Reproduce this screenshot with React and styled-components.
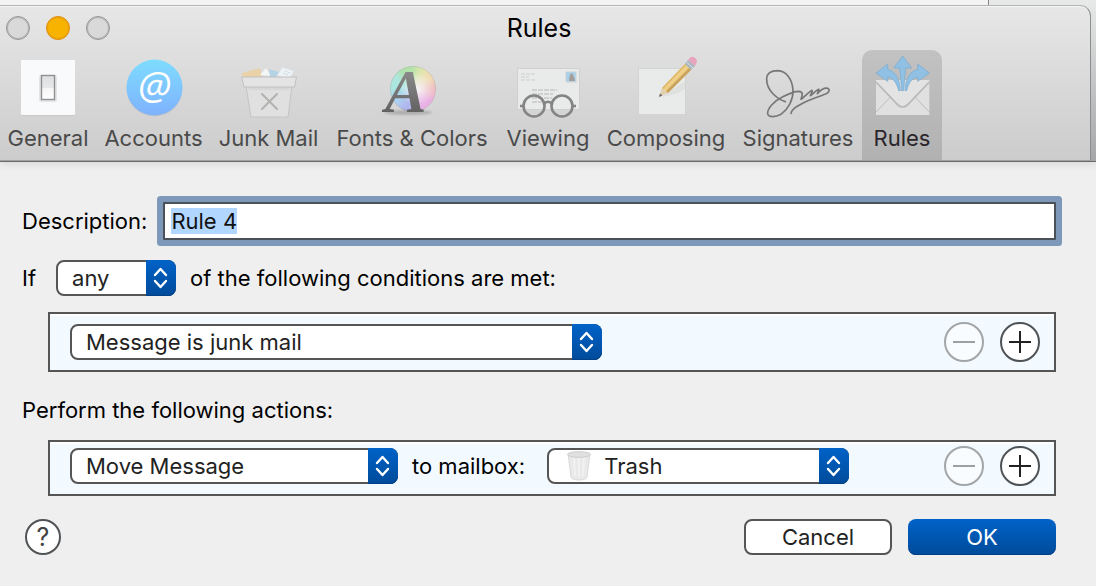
import React, { useState, useEffect, useRef } from 'react'
import styled, { createGlobalStyle, css } from 'styled-components'


const GlobalStyle = createGlobalStyle`
* {
box-sizing: border-box;
}
body {
margin: 0;
background-color: #efefef;
color: #000;
font-family: Inter, "Liberation Sans", sans-serif;
font-size: 22px;
line-height: 28px;
}
button, input, select {
font: inherit;
color: inherit;
margin: 0;
}
`

const Header = styled.header`
padding: 5px 5px 0 0;
background:
linear-gradient(to right, #f3f3f3 calc(100% - 108px), #858585 calc(100% - 108px), #858585 calc(100% - 107px), transparent calc(100% - 107px)) top / 100% 5px no-repeat,
linear-gradient(#e8eaea, #c4c6c7 50%, #a4a6a8);
border-bottom: 1px solid #6a6a6a;
box-shadow: 0 2px 8px rgba(0, 0, 0, 0.1);
`

const Toolbar = styled.div`
border-top: 1px solid #b4b4b4;
border-right: 1px solid #8e8e8e;
border-bottom: 1px solid #a0a0a0;
border-top-right-radius: 11px;
background: linear-gradient(#e7e7e7, #cccccc);
box-shadow: inset 0 1px 0 #f6f6f6;
`

const TitleBar = styled.div`
display: grid;
grid-template-columns: 1fr auto 1fr;
align-items: center;
height: 44px;
padding: 0 18px 0 6px;
`

const WindowButtons = styled.div`
display: flex;
gap: 16px;
`

const WindowButton = styled.button`
width: 24px;
height: 24px;
padding: 0;
border: 1px solid ${prop => prop.$active ? "#dc8d10" : "#949698"};
border-radius: 50%;
background-color: ${prop => prop.$active ? "#f7b300" : "#d9d9d9"};
box-shadow: inset 0 0 0 1px ${prop => prop.$active ? "#efa50a" : "#b4b5b6"};
`

const Title = styled.h1`
margin: 0;
font-size: 25px;
font-weight: 400;
line-height: 32px;
`

const Tabs = styled.nav`
display: flex;
`

const Tab = styled.button`
display: flex;
flex-direction: column;
align-items: center;
flex: 0 1 ${prop => prop.$width}px;
min-width: 0;
height: 110px;
padding: 4px 0 0;
border: none;
border-radius: 10px 10px 0 0;
background-color: ${prop => prop.$selected ? "rgba(0, 0, 0, 0.13)" : "transparent"};
color: ${prop => prop.$selected ? "#2a262b" : "#4a4a4a"};
white-space: nowrap;
`

const TabIcon = styled.svg`
display: block;
flex: none;
width: 72px;
height: 64px;
margin-bottom: 6px;
overflow: visible;
`

const Form = styled.form`
padding: 40px 40px 31px 22px;
`

const Row = styled.div`
display: flex;
align-items: center;
gap: ${prop => prop.$gap || 14}px;
`

const Label = styled.label`
flex: none;
`

const TextInput = styled.input`
flex: 1;
min-width: 0;
height: 38px;
padding: 0 6px;
border: 2px solid #4a5159;
border-radius: 1px;
outline: none;
background-color: #fff;
line-height: 28px;
box-shadow: 0 0 0 6px #7e98ba;
&::selection {
background-color: #b1d6ff;
color: #111;
}
`

const ConditionRow = styled(Row)`
margin: 20px 0 16px;
`

const IfText = styled.span`
margin-right: 6px;
`

const Heading = styled.h2`
margin: 24px 0 16px;
font-size: 22px;
font-weight: 400;
line-height: 28px;
`

const Panel = styled.div`
display: flex;
align-items: center;
gap: 14px;
margin-left: 26px;
padding: ${prop => prop.$tight ? "4px 14px 8px 20px" : "8px 14px 8px 20px"};
border: 2px solid #555;
background-color: #f2f9ff;
box-shadow: inset 0 2px 0 #fff;
`

const MailboxText = styled.span`
margin-right: 8px;
`

const SelectBox = styled.span`
display: grid;
grid-template-columns: 1fr 30px;
grid-template-rows: 36px;
align-items: center;
flex: 0 1 ${prop => prop.$width}px;
min-width: 0;
`

const NativeSelect = styled.select`
grid-area: 1 / 1 / 2 / 3;
appearance: none;
width: 100%;
height: 36px;
padding: 0 36px 0 ${prop => prop.$hasIcon ? 55 : 14}px;
border: 2px solid #555;
border-radius: 8px;
background-color: #fff;
color: #222;
`

const blueFill = css`
background: linear-gradient(#0062c8, #004b9a);
box-shadow: inset 0 -1px 0 #003f86;
`

const SelectCap = styled.span`
grid-area: 1 / 2 / 2 / 3;
height: 36px;
border-radius: 0 8px 8px 0;
pointer-events: none;
z-index: 1;
${blueFill}
`

const SelectIcon = styled.svg`
grid-area: 1 / 1 / 2 / 2;
width: 26px;
height: 32px;
margin-left: 19px;
pointer-events: none;
z-index: 1;
`

const RoundButtons = styled.div`
display: flex;
gap: 16px;
margin-left: auto;
`

const RoundButton = styled.button`
display: grid;
place-items: center;
width: 40px;
height: 40px;
padding: 0;
border: 2px solid #505355;
border-radius: 50%;
background-color: #fff;
color: #222;
&:disabled {
border-color: #a3a5a7;
background-color: #f8fcff;
color: #9da0a2;
}
`

const HelpButton = styled(RoundButton)`
width: 36px;
height: 36px;
margin: 0 auto 0 3px;
color: #444;
font-size: 25px;
`

const Footer = styled(Row)`
margin-top: 23px;
`

const PushButton = styled.button`
flex: 0 1 148px;
height: 36px;
padding: 0;
border: 2px solid #555;
border-radius: 8px;
background-color: #fff;
color: #222;
${prop => prop.$primary && css`
border: none;
color: #fff;
${blueFill}
`}
`


const GeneralIcon = () => (
    <TabIcon viewBox="0 0 72 64" aria-hidden="true">
        <defs>
            <linearGradient id="rocker" x1="0" y1="0" x2="0" y2="1">
                <stop offset="0" stopColor="#dedfe1" />
                <stop offset="0.5" stopColor="#e6e7e8" />
                <stop offset="0.52" stopColor="#f5f5f5" />
                <stop offset="1" stopColor="#fff" />
            </linearGradient>
        </defs>
        <rect x="9" y="7" width="54" height="55" rx="1" fill="#c2c2c2" opacity="0.6" />
        <rect x="9" y="6" width="54" height="55" rx="1" fill="#f9fafb" />
        <rect x="27" y="21" width="18" height="27" rx="2" fill="#e4e5e6" />
        <rect x="29.5" y="21.5" width="13" height="24" fill="url(#rocker)" stroke="#8f9091" strokeWidth="1.4" />
    </TabIcon>
)

const AccountsIcon = () => (
    <TabIcon viewBox="0 0 72 64" aria-hidden="true">
        <defs>
            <linearGradient id="sky" x1="0" y1="0" x2="0" y2="1">
                <stop offset="0" stopColor="#7edcff" />
                <stop offset="1" stopColor="#7fb2fd" />
            </linearGradient>
        </defs>
        <circle cx="36.5" cy="34.5" r="28" fill="#a9b2bd" opacity="0.5" />
        <circle cx="36.5" cy="33.5" r="28" fill="url(#sky)" />
        <text x="36.5" y="46" textAnchor="middle" fontFamily="Open Sans" fontStyle="italic" fontSize="39" fill="#fff">@</text>
    </TabIcon>
)

const JunkIcon = () => (
    <TabIcon viewBox="1 1 72 64" aria-hidden="true">
        <path d="M10 20L28 15L30 24H10Z" fill="#e9d1a8" />
        <path d="M28 22L34 15L39 23Z" fill="#f4f5f5" />
        <path d="M37 16L47 19L44 24H38Z" fill="#b4d3e5" />
        <path d="M50 14L62 18L58 25L45 23Z" fill="#eef2f5" stroke="#d3dbe1" strokeWidth="0.6" />
        <path d="M53 18L58 20M51 20L56 22" stroke="#c3d5e2" strokeWidth="0.8" />
        <path d="M14 33H60L56 64H19Z" fill="#e0e0e0" stroke="#c4c4c4" />
        <path d="M16 34H58L57 37H17Z" fill="#d0d0d0" opacity="0.6" />
        <path d="M9.5 24H64.5L62.5 34H12Z" fill="#e4e4e4" stroke="#c0c0c0" strokeLinejoin="round" />
        <path d="M30 41L45 56M45 41L30 56" stroke="#b2b2b1" strokeWidth="2" strokeLinecap="round" />
    </TabIcon>
)

const FontsIcon = () => (
    <TabIcon viewBox="0 0 72 64" aria-hidden="true">
        <defs>
            <clipPath id="wheel"><circle cx="37" cy="35" r="23" /></clipPath>
            <filter id="soften" x="-20%" y="-20%" width="140%" height="140%"><feGaussianBlur stdDeviation="3" /></filter>
            <radialGradient id="glow">
                <stop offset="0" stopColor="#f6f6f6" />
                <stop offset="1" stopColor="#f6f6f6" stopOpacity="0" />
            </radialGradient>
            <linearGradient id="ink" x1="0" y1="0" x2="0" y2="1">
                <stop offset="0" stopColor="#999" />
                <stop offset="1" stopColor="#555" />
            </linearGradient>
        </defs>
        <g clipPath="url(#wheel)">
            <g filter="url(#soften)">
                <path d="M37 34L8 6H42Z" fill="#b0e2aa" />
                <path d="M37 34L42 4L64 10Z" fill="#dde7ac" />
                <path d="M37 34L60 4L68 32Z" fill="#f1dcb2" />
                <path d="M37 34L68 26V52Z" fill="#efbdc4" />
                <path d="M37 34L68 48L40 66Z" fill="#eab0e5" />
                <path d="M37 34L44 66L10 60Z" fill="#b0b6ee" />
                <path d="M37 34L14 64L6 36Z" fill="#acd1f0" />
                <path d="M37 34L6 42L8 6Z" fill="#abe6df" />
            </g>
            <circle cx="41" cy="35" r="17" fill="url(#glow)" />
        </g>
        <circle cx="37" cy="35" r="22.6" fill="none" stroke="#aaa" strokeWidth="0.6" opacity="0.7" />
        <ellipse cx="32" cy="58.5" rx="24" ry="2.5" fill="#777" opacity="0.4" filter="blur(1px)" />
        <text x="9" y="58" fontFamily="Liberation Serif" fontSize="62" fontWeight="700" fontStyle="italic" fill="url(#ink)">A</text>
    </TabIcon>
)

const ViewingIcon = () => (
    <TabIcon viewBox="0 0 72 64" aria-hidden="true">
        <rect x="5.5" y="14.5" width="62" height="41" fill="#e9eaea" stroke="#d0d0d0" />
        <rect x="54" y="18" width="10" height="10" fill="#a5cfea" stroke="#d0d4d7" />
        <path d="M57 27C57 23 58 20 60 19C61 22 63 24 63 27Z" fill="#a39f98" />
        <path d="M9 20H23M9 23H17M9 26H24" stroke="#cbcbcb" strokeWidth="1.2" strokeDasharray="4 1" />
        <path d="M20 36H45M20 40H41M20 44H40M20 48H30" stroke="#d0d0d0" strokeWidth="2" strokeDasharray="5 1" />
        <g fill="none" stroke="#848484" strokeWidth="2.6">
            <circle cx="22" cy="52" r="10.5" />
            <circle cx="50" cy="52" r="10.5" />
            <path d="M32 50C34 47 38 47 40 50M12 52H8M60 52H64" />
        </g>
    </TabIcon>
)

const ComposingIcon = () => (
    <TabIcon viewBox="0 0 72 64" aria-hidden="true">
        <rect x="8.5" y="14.5" width="47" height="46" fill="#e9ebeb" stroke="#d2d3d3" />
        <path d="M31 43L55 27V35C48 40 40 42 31 43Z" fill="#d8d8d8" opacity="0.6" />
        <path d="M29 43L32 34L38 39Z" fill="#e2cfae" />
        <path d="M29 43L30 39.5L32.4 41.5Z" fill="#666" />
        <path d="M32 34L55 10L61 16L38 39Z" fill="#efce85" />
        <path d="M36 37L59 14L61 16L38 39Z" fill="#c9a25d" />
        <path d="M32 34L55 10L56 11L33 35Z" fill="#dcb668" />
        <path d="M55 10L58 6L65 12L61 16Z" fill="#a9b5bd" />
        <path d="M57 8.5L63 14" stroke="#dde3e6" strokeWidth="1" />
        <path d="M58 6C61 2 63 2 65 4C68 6 67 9 65 12Z" fill="#e6a5bd" />
    </TabIcon>
)

const SignaturesIcon = () => (
    <TabIcon viewBox="-3 0 216 192" aria-hidden="true">
        <path
            d="M67 143C44 136 10 110 11 74C12 56 27 50 44 50C72 51 88 78 90 108C91 137 76 165 54 181C38 190 16 191 14 179C13 162 34 141 58 129C75 120 93 112 107 112C121 113 119 122 114 136C123 131 131 119 146 109C150 109 146 116 142 125C149 121 157 111 167 106C170 107 165 112 163 119C171 110 183 100 194 103C203 107 197 117 186 121C163 129 132 139 111 152C98 160 86 165 84 178"
            fill="none"
            stroke="#777"
            strokeWidth="5"
            strokeLinecap="round"
            strokeLinejoin="round"
        />
    </TabIcon>
)

const RulesIcon = () => (
    <TabIcon viewBox="0 0 216 192" aria-hidden="true">
        <rect x="30" y="78" width="160" height="105" fill="#e0e0e1" />
        <path d="M30 174L76 126M190 174L144 126" stroke="#bdbdbe" strokeWidth="3" />
        <path d="M30 78L91 146Q110 168 129 146L190 78Z" fill="#e3e3e3" />
        <path d="M30 84L91 148Q110 170 129 148L190 84" fill="none" stroke="#b9b9ba" strokeWidth="5" />
        <g fill="#90c0e4" stroke="#79a9cd" strokeWidth="2" strokeLinejoin="round">
            <path d="M110 6L137 42H119L113 110H107L101 42H83Z" />
            <path id="side-arrow" d="M30 57L65 30V46C90 52 102 78 103 110H98C91 84 82 73 65 69V82Z" />
            <use href="#side-arrow" transform="translate(220 0) scale(-1 1)" />
        </g>
    </TabIcon>
)

const tabs = [
    { name: 'General', width: 96, Icon: GeneralIcon },
    { name: 'Accounts', width: 115, Icon: AccountsIcon },
    { name: 'Junk Mail', width: 115, Icon: JunkIcon },
    { name: 'Fonts & Colors', width: 172, Icon: FontsIcon },
    { name: 'Viewing', width: 100, Icon: ViewingIcon },
    { name: 'Composing', width: 136, Icon: ComposingIcon },
    { name: 'Signatures', width: 128, Icon: SignaturesIcon },
    { name: 'Rules', width: 80, Icon: RulesIcon },
]

const TrashIcon = () => (
    <SelectIcon viewBox="0 0 26 32" aria-hidden="true">
        <path d="M2 4L5 27Q6 30 13 30Q20 30 21 27L24 4Z" fill="#e9e9e9" stroke="#dadada" />
        <path d="M8 8L9 26M13 8V27M18 8L17 26" stroke="#f1f1f1" strokeWidth="2" />
        <ellipse cx="13" cy="4.5" rx="11.5" ry="2.8" fill="#e0e0e0" stroke="#cdcdcd" />
    </SelectIcon>
)

const PopUp = ({ label, options, width, icon }) => {
    const [value, setValue] = useState(options[0])

    return (
        <SelectBox $width={width}>
            <NativeSelect aria-label={label} $hasIcon={!!icon} value={value} onChange={(e) => setValue(e.target.value)}>
                {options.map(option => <option key={option}>{option}</option>)}
            </NativeSelect>
            {icon}
            <SelectCap>
                <svg width="30" height="36" viewBox="0 0 30 36" fill="none" stroke="#fff" strokeWidth="2.4" strokeLinecap="round" strokeLinejoin="round" aria-hidden="true">
                    <path d="M9 15L14.5 9L20 15M9 21L14.5 27L20 21" />
                </svg>
            </SelectCap>
        </SelectBox>
    )
}

const AddRemove = ({ what }) => (
    <RoundButtons>
        <RoundButton type="button" disabled aria-label={`Remove ${what}`}>
            <svg width="24" height="24" stroke="currentColor" strokeWidth="2"><path d="M1 12H23" /></svg>
        </RoundButton>
        <RoundButton type="button" aria-label={`Add ${what}`}>
            <svg width="24" height="24" stroke="currentColor" strokeWidth="2"><path d="M1 12H23M12 1V23" /></svg>
        </RoundButton>
    </RoundButtons>
)

const App = () => {
    const [selected, setSelected] = useState('Rules')
    const [description, setDescription] = useState('Rule 4')
    const inputRef = useRef(null)

    useEffect(() => {
        inputRef.current.focus()
        inputRef.current.select()
    }, [])

    return (
        <>
            <GlobalStyle />
            <Header>
                <Toolbar>
                    <TitleBar>
                        <WindowButtons>
                            <WindowButton aria-label="Close" />
                            <WindowButton $active aria-label="Minimize" />
                            <WindowButton aria-label="Zoom" />
                        </WindowButtons>
                        <Title>Rules</Title>
                    </TitleBar>
                    <Tabs>
                        {tabs.map(({ name, width, Icon }) => (
                            <Tab key={name} $width={width} $selected={name === selected} onClick={() => setSelected(name)}>
                                <Icon />
                                {name}
                            </Tab>
                        ))}
                    </Tabs>
                </Toolbar>
            </Header>
            <Form onSubmit={(e) => e.preventDefault()}>
                <Row $gap={16}>
                    <Label htmlFor="description">Description:</Label>
                    <TextInput id="description" ref={inputRef} value={description} onChange={(e) => setDescription(e.target.value)} />
                </Row>
                <ConditionRow>
                    <IfText>If</IfText>
                    <PopUp label="Match" options={['any', 'all']} width={120} />
                    <span>of the following conditions are met:</span>
                </ConditionRow>
                <Panel>
                    <PopUp label="Condition" options={['Message is junk mail', 'From', 'Subject']} width={532} />
                    <AddRemove what="condition" />
                </Panel>
                <Heading>Perform the following actions:</Heading>
                <Panel $tight>
                    <PopUp label="Action" options={['Move Message', 'Copy Message', 'Delete Message']} width={328} />
                    <MailboxText>to mailbox:</MailboxText>
                    <PopUp label="Mailbox" options={['Trash', 'Junk', 'Archive']} width={302} icon={<TrashIcon />} />
                    <AddRemove what="action" />
                </Panel>
                <Footer $gap={16}>
                    <HelpButton type="button" aria-label="Help">?</HelpButton>
                    <PushButton type="button">Cancel</PushButton>
                    <PushButton type="submit" $primary>OK</PushButton>
                </Footer>
            </Form>
        </>
    )
}

export default App
